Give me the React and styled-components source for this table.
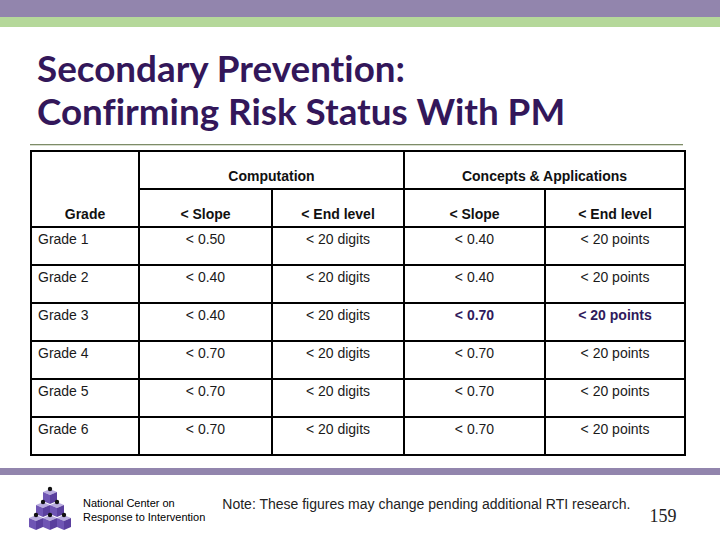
import React from 'react';
import styled, { createGlobalStyle } from 'styled-components';

const GlobalStyle = createGlobalStyle`
  html, body {
    margin: 0;
    padding: 0;
    background: #fff;
  }
`;

// Slide frame
const Slide = styled.div`
  width: 720px;
  height: 540px;
  display: flex;
  flex-direction: column;
  background: #fff;
  overflow: hidden;
`;
const Band = styled.div`
  height: ${props => props.h}px;
  margin-top: ${props => props.gap || 0}px;
  background: ${props => props.color};
  flex-shrink: 0;
`;
const Title = styled.h1`
  margin: 20px 0 0 37px;
  font-family: Lato, "Open Sans", sans-serif;
  font-weight: 700;
  font-size: 36.8px;
  line-height: 43px;
  color: #33175a;
  font-variant-ligatures: none;
`;
const Rule = styled.div`
  margin: 11px 37px 0 30px;
  height: 1px;
  background: #7d8c68;
  border-bottom: 1px solid #d9ded0;
`;

// Table
const Table = styled.table`
  margin: 4px 0 0 30px;
  width: 654px;
  border-collapse: collapse;
  table-layout: fixed;
  font-family: "Liberation Sans", Arial, sans-serif;
  font-size: 14px;
  line-height: 16px;
  color: #111;
`;
const Th = styled.th`
  border: 2px solid #000;
  height: 32px;
  padding: 0 4px 4px;
  vertical-align: bottom;
  text-align: center;
  font-weight: 700;
  font-size: 14px;
`;
const Td = styled.td`
  border: 2px solid #000;
  height: 33px;
  padding: 3px 6px 0;
  vertical-align: top;
  text-align: ${props => (props.left ? 'left' : 'center')};
  font-weight: ${props => (props.strong ? 700 : 400)};
  color: ${props => (props.strong ? '#2f1a5c' : '#1a1a1a')};
`;

// Footer
const Footer = styled.div`
  display: flex;
  align-items: flex-start;
  padding: 10px 0 0 28px;
`;
const Logo = styled.div`
  display: flex;
  align-items: center;
  gap: 9px;
`;
const LogoText = styled.div`
  font-family: "Liberation Sans", Arial, sans-serif;
  font-size: 11px;
  line-height: 14px;
  color: #000;
  margin-top: 2px;
`;
const Note = styled.div`
  margin: 11px 0 0 17px;
  font-family: "Liberation Sans", Arial, sans-serif;
  font-size: 14px;
  color: #222;
`;
const PageNum = styled.div`
  margin: 21px 0 0 19px;
  font-family: "Liberation Serif", serif;
  font-size: 18px;
  color: #222;
`;

const Cube = ({ x, y }) => (
  <g>
    <polygon points={`${x},${y} ${x + 7},${y - 3} ${x + 14},${y} ${x + 7},${y + 3}`} fill="#b9acdf" />
    <polygon points={`${x},${y} ${x + 7},${y + 3} ${x + 7},${y + 12} ${x},${y + 9}`} fill="#6f55b4" />
    <polygon points={`${x + 7},${y + 3} ${x + 14},${y} ${x + 14},${y + 9} ${x + 7},${y + 12}`} fill="#5a3f9e" />
    <circle cx={x + 7} cy={y - 3} r="2.2" fill="#111" />
  </g>
);

const RtiLogo = () => (
  <svg width="46" height="48" viewBox="0 0 46 48">
    <Cube x={15} y={7} />
    <Cube x={8} y={20} />
    <Cube x={22} y={20} />
    <Cube x={1} y={33} />
    <Cube x={15} y={33} />
    <Cube x={29} y={33} />
  </svg>
);

const rows = [
  ['Grade 1', '< 0.50', '< 0.40'],
  ['Grade 2', '< 0.40', '< 0.40'],
  ['Grade 3', '< 0.40', '< 0.70', true],
  ['Grade 4', '< 0.70', '< 0.70'],
  ['Grade 5', '< 0.70', '< 0.70'],
  ['Grade 6', '< 0.70', '< 0.70'],
];

export default function App() {
  return (
    <>
      <GlobalStyle />
      <Slide>
        <Band h={17} color="#9285ad" />
        <Band h={10} color="#b5d89a" />
        <Title>
          Secondary Prevention:
          <br />
          Confirming Risk Status With PM
        </Title>
        <Rule />
        <Table>
          <colgroup>
            <col style={{ width: 108 }} />
            <col style={{ width: 133 }} />
            <col style={{ width: 132 }} />
            <col style={{ width: 141 }} />
            <col style={{ width: 140 }} />
          </colgroup>
          <thead>
            <tr>
              <Th rowSpan={2}>Grade</Th>
              <Th colSpan={2}>Computation</Th>
              <Th colSpan={2}>Concepts &amp; Applications</Th>
            </tr>
            <tr>
              <Th>&lt; Slope</Th>
              <Th>&lt; End level</Th>
              <Th>&lt; Slope</Th>
              <Th>&lt; End level</Th>
            </tr>
          </thead>
          <tbody>
            {rows.map(([grade, comp, concepts, strong]) => (
              <tr key={grade}>
                <Td left>{grade}</Td>
                <Td>{comp}</Td>
                <Td>&lt; 20 digits</Td>
                <Td strong={strong}>{concepts}</Td>
                <Td strong={strong}>&lt; 20 points</Td>
              </tr>
            ))}
          </tbody>
        </Table>
        <Band h={7} gap={12} color="#9285ad" />
        <Footer>
          <Logo>
            <RtiLogo />
            <LogoText>
              National Center on
              <br />
              Response to Intervention
            </LogoText>
          </Logo>
          <Note>Note: These figures may change pending additional RTI research.</Note>
          <PageNum>159</PageNum>
        </Footer>
      </Slide>
    </>
  );
}
